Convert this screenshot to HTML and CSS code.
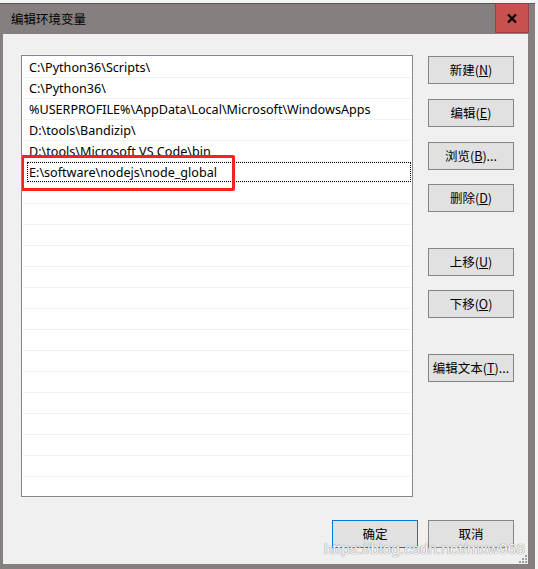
FILE: index.html
```html
<!DOCTYPE html>
<html lang="zh-CN">
<head>
<meta charset="utf-8">
<title>编辑环境变量</title>
<link rel="stylesheet" href="styles.css">
</head>
<body>
<div class="window">
  <div class="titlebar">
    <span class="title">编辑环境变量</span>
    <div class="close">
      <svg width="10" height="9" viewBox="0 0 10 9"><path d="M1 0.5 L9 8.5 M9 0.5 L1 8.5" stroke="#000" stroke-width="2.2"/></svg>
    </div>
  </div>
  <div class="client">
    <div class="main">
      <div class="list">
        <div class="row">C:\Python36\Scripts\</div>
        <div class="row">C:\Python36\</div>
        <div class="row">%USERPROFILE%\AppData\Local\Microsoft\WindowsApps</div>
        <div class="row">D:\tools\Bandizip\</div>
        <div class="row">D:\tools\Microsoft VS Code\bin</div>
        <div class="row edit"><span class="focus">E:\software\nodejs\node_global</span></div>
        <div class="row"></div>
        <div class="row"></div>
        <div class="row"></div>
        <div class="row"></div>
        <div class="row"></div>
        <div class="row"></div>
        <div class="row"></div>
        <div class="row"></div>
        <div class="row"></div>
        <div class="row"></div>
        <div class="row"></div>
        <div class="row"></div>
        <div class="row"></div>
        <div class="row"></div>
        <div class="row"></div>
        <div class="mark"></div>
      </div>
      <div class="side">
        <button class="btn">新建(<u>N</u>)</button>
        <button class="btn s15">编辑(<u>E</u>)</button>
        <button class="btn s15">浏览(<u>B</u>)...</button>
        <button class="btn s14">删除(<u>D</u>)</button>
        <button class="btn s36">上移(<u>U</u>)</button>
        <button class="btn s14">下移(<u>O</u>)</button>
        <button class="btn s36">编辑文本(<u>T</u>)...</button>
      </div>
    </div>
    <div class="footer">
      <button class="btn default">确定</button>
      <button class="btn">取消</button>
    </div>
    <svg class="grip" width="8" height="8" viewBox="0 0 8 8">
      <g fill="#a0a0a0">
        <rect x="6" y="0" width="2" height="2"/>
        <rect x="3" y="3" width="2" height="2"/><rect x="6" y="3" width="2" height="2"/>
        <rect x="0" y="6" width="2" height="2"/><rect x="3" y="6" width="2" height="2"/><rect x="6" y="6" width="2" height="2"/>
      </g>
    </svg>
  </div>
</div>
<div class="watermark">https://blog.csdn.net/mxw968</div>
</body>
</html>
```

FILE: styles.css
```css
html, body {
  margin: 0;
  padding: 0;
}
body {
  width: 538px;
  height: 569px;
  overflow: hidden;
  background: #f4f4f4;
  font-family: "Noto Sans", "Noto Sans CJK SC", sans-serif;
  font-size: 12px;
  color: #000;
  position: relative;
}
.window {
  margin-top: 3px;
  width: 535px;
  height: 566px;
  box-sizing: border-box;
  background: #85807f;
  border-top: 1px solid #5a5655;
  padding: 0 7px 5px 3px;
  display: flex;
  flex-direction: column;
}
.titlebar {
  height: 30px;
  display: flex;
  align-items: flex-start;
  justify-content: space-between;
}
.title {
  padding-left: 8px;
  line-height: 30px;
  font-family: "Noto Sans CJK SC", sans-serif;
  font-size: 12.5px;
  color: #000;
}
.close {
  width: 32px;
  height: 28px;
  background: #c75050;
  border: 1px solid #9a4040;
  border-top: none;
  box-sizing: content-box;
  display: flex;
  align-items: center;
  justify-content: center;
  margin-right: -1px;
}
.client {
  flex: 1;
  background: #f0f0f0;
  padding: 21px 14px 16px 18px;
  display: flex;
  flex-direction: column;
  position: relative;
}
.main {
  display: flex;
  gap: 15px;
}
.list {
  width: 392px;
  height: 442px;
  box-sizing: border-box;
  border: 1px solid #828790;
  background: #fff;
  padding: 1px;
  overflow: hidden;
  position: relative;
}
.row {
  height: 20px;
  line-height: 22px;
  border-bottom: 1px solid #f0f0f0;
  padding-left: 6px;
  white-space: nowrap;
  font-size: 12.6px;
}
.row.edit {
  padding-left: 4px;
}
.focus {
  display: block;
  height: 18px;
  line-height: 20px;
  border: 1px dotted #000;
  padding-left: 1px;
}
.mark {
  position: absolute;
  left: -1px;
  top: 99px;
  width: 208px;
  height: 30px;
  border: 3px solid #f5231c;
  border-radius: 2px;
}
.side {
  display: flex;
  flex-direction: column;
  padding-top: 1px;
}
.btn {
  width: 86px;
  height: 28px;
  box-sizing: border-box;
  border: 1px solid #858585;
  background: #e1e1e1;
  font-family: "Noto Sans CJK SC", sans-serif;
  font-size: 12.5px;
  color: #000;
  padding: 0;
  margin: 0;
  line-height: 24px;
}
.btn u {
  text-decoration: underline;
  text-underline-offset: 1px;
}
.s15 { margin-top: 15px; }
.s14 { margin-top: 14px; }
.s36 { margin-top: 36px; }
.footer {
  margin-top: 23px;
  display: flex;
  justify-content: flex-end;
  gap: 10px;
}
.btn.default {
  border-color: #0078d7;
}
.grip {
  position: absolute;
  right: 1px;
  bottom: 1px;
}
.watermark {
  position: absolute;
  left: 324px;
  top: 540px;
  font-family: "Liberation Sans", Arial, sans-serif;
  font-size: 15.5px;
  color: rgba(255, 255, 255, 0.95);
  text-shadow: 0 0 1px #8a8a8a, 0 0 1px #8a8a8a;
  white-space: nowrap;
}
```
